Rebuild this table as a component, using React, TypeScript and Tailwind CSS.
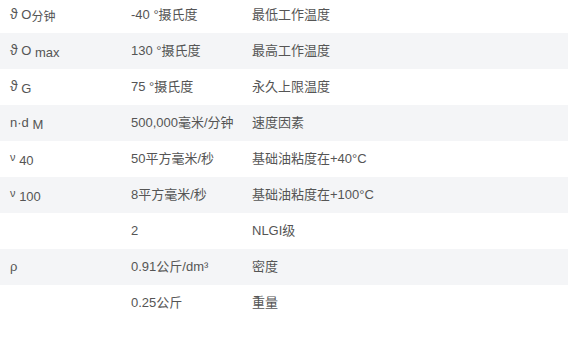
const sub = "text-[13px] leading-none align-[-2px]";
const theta = <span className="text-[14px] leading-none">ϑ</span>;
const nu = <span className="text-[11px] leading-none align-[2px]">ν</span>;

const rows: { sym: React.ReactNode; value: string; label: string }[] = [
  { sym: <>{theta} O<span className="text-[12px] leading-none align-[-2px]">分钟</span></>, value: "-40 °摄氏度", label: "最低工作温度" },
  { sym: <>{theta} O <span className={sub}>max</span></>, value: "130 °摄氏度", label: "最高工作温度" },
  { sym: <>{theta} <span className={sub}>G</span></>, value: "75 °摄氏度", label: "永久上限温度" },
  { sym: <>n·d <span className={sub}>M</span></>, value: "500,000毫米/分钟", label: "速度因素" },
  { sym: <>{nu} <span className={sub}>40</span></>, value: "50平方毫米/秒", label: "基础油粘度在+40°C" },
  { sym: <>{nu} <span className={sub}>100</span></>, value: "8平方毫米/秒", label: "基础油粘度在+100°C" },
  { sym: null, value: "2", label: "NLGI级" },
  { sym: <>ρ</>, value: "0.91公斤/dm³", label: "密度" },
  { sym: null, value: "0.25公斤", label: "重量" },
];

export default function App() {
  return (
    <div className="w-[568px] h-[337px] overflow-hidden bg-white">
      <table
        className="w-full -mt-[3px] text-[13px] text-[#555] border-collapse"
        style={{ fontFamily: '"Liberation Sans", Arial, "Noto Sans CJK SC", sans-serif' }}
      >
        <tbody>
          {rows.map((r, i) => (
            <tr key={i} className={`h-[36px] ${i % 2 === 1 ? "bg-[#f4f5f7]" : "bg-white"}`}>
              <td className="w-[121px] pl-[10px] align-middle whitespace-nowrap">{r.sym}</td>
              <td className="w-[121px] pl-[10px] align-middle whitespace-nowrap">{r.value}</td>
              <td className="pl-[10px] align-middle whitespace-nowrap">{r.label}</td>
            </tr>
          ))}
        </tbody>
      </table>
    </div>
  );
}
